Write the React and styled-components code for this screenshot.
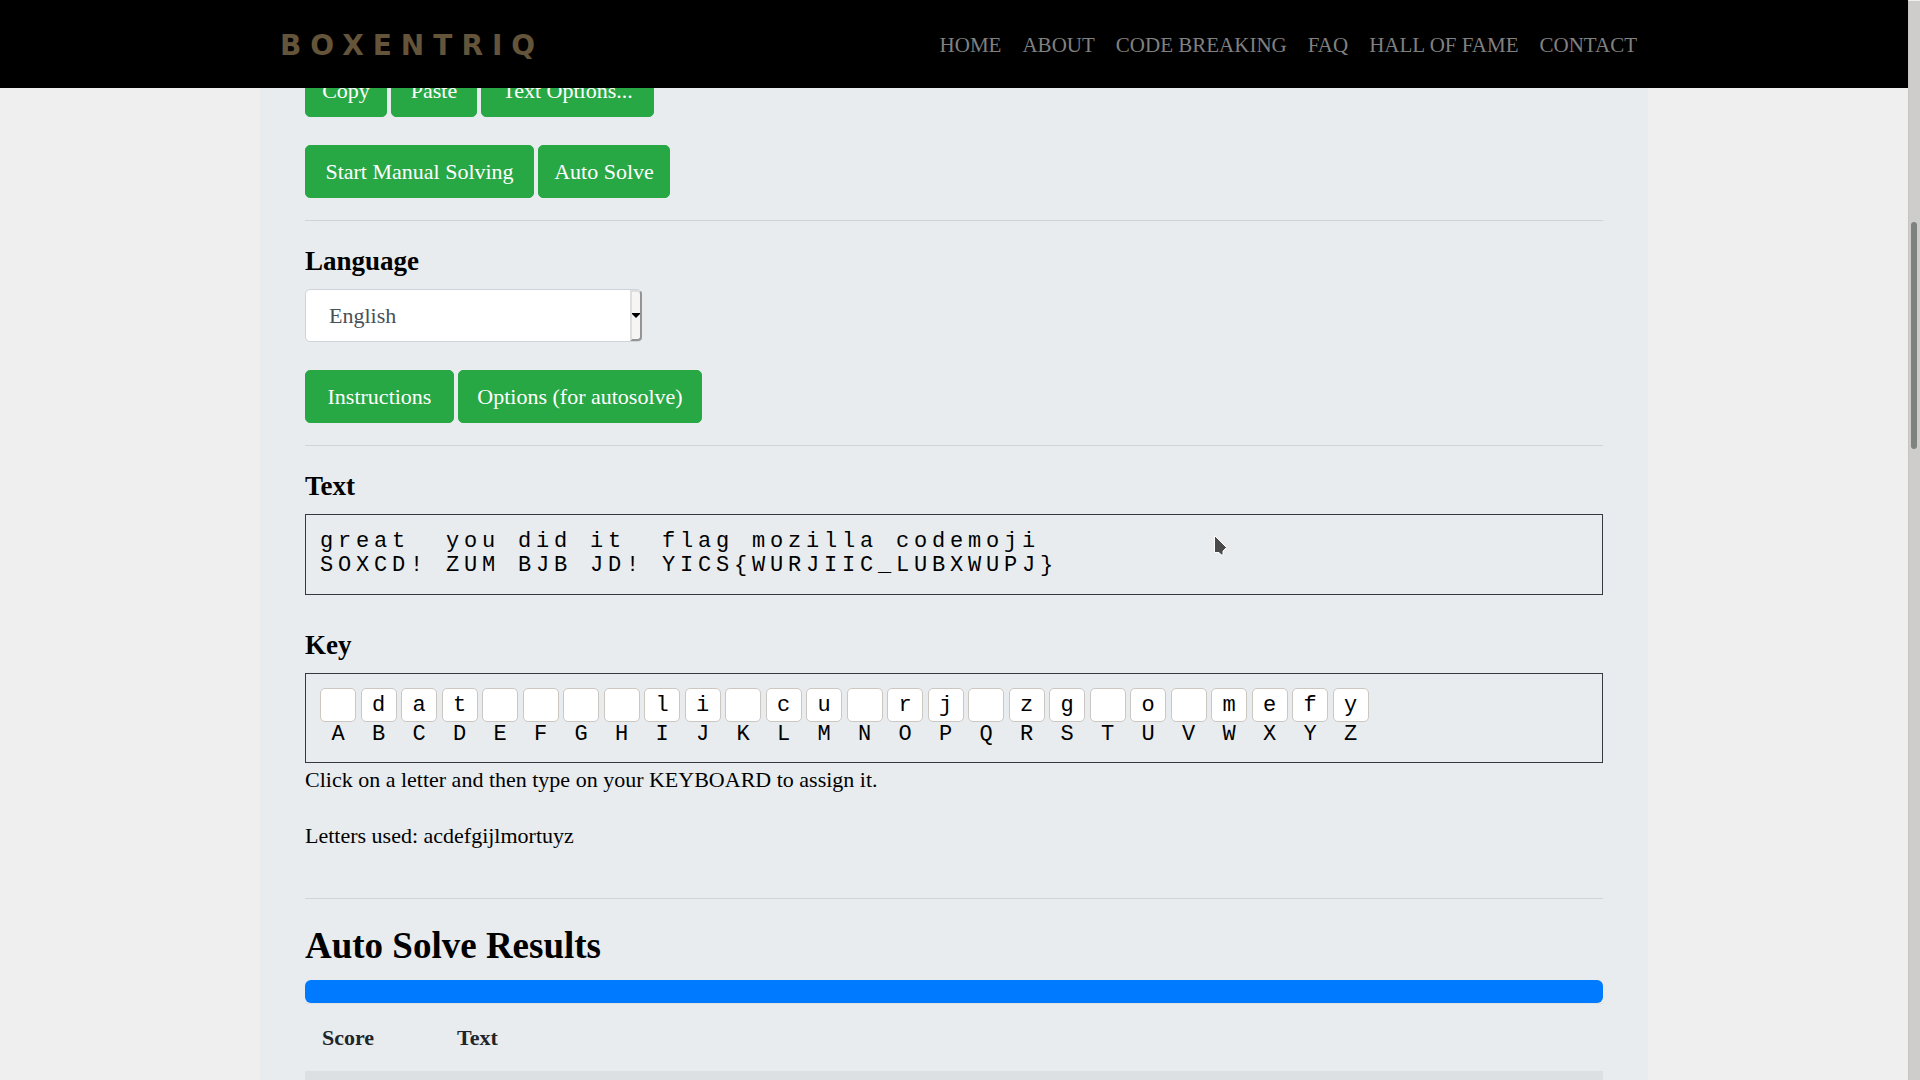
import React from "react";
import styled, { createGlobalStyle } from "styled-components";

const serif = '"Liberation Serif", "Times New Roman", serif';
const mono = '"Liberation Mono", "Courier New", monospace';

const GlobalStyle = createGlobalStyle`
  *, *::before, *::after { box-sizing: border-box; }
  body {
    margin: 0;
    background: #efefef;
    color: #000;
    font: 22px/33px ${serif};
  }
`;

const Shell = styled.div`
  display: grid;
  grid-template-columns: minmax(0, 1fr) 12px;
  height: 100vh;
  overflow: hidden;
`;

const Viewport = styled.div`
  min-width: 0;
  overflow: hidden;
`;

const Header = styled.header`
  position: fixed;
  inset: 0 12px auto 0;
  z-index: 2;
  background: #000;
`;

const HeaderInner = styled.div`
  display: flex;
  align-items: center;
  justify-content: space-between;
  max-width: 1388px;
  height: 88px;
  margin: 0 auto;
  padding: 2px 11px 0 20px;
`;

const Brand = styled.a`
  color: #64543a;
  font: bold 28px/33px "DejaVu Sans", sans-serif;
  letter-spacing: 9px;
  text-decoration: none;
`;

const Nav = styled.nav`
  display: flex;
  gap: 21px;
`;

const NavLink = styled.a`
  color: #808080;
  font-size: 21px;
  text-decoration: none;
`;

const Main = styled.main`
  max-width: 1388px;
  min-height: 100vh;
  margin: 0 auto;
  padding: 64px 45px 0;
  background: #e8ecef;
`;

const ButtonRow = styled.div`
  display: flex;
  flex-wrap: wrap;
  gap: 4px;
  margin-bottom: ${(p) => (p.$last ? 22 : 28)}px;
`;

const Button = styled.button`
  width: ${(p) => p.$width}px;
  padding: 9px 0;
  border: 1px solid #28a745;
  border-radius: 5px;
  background: #28a745;
  color: #fff;
  font: inherit;
  white-space: nowrap;
  cursor: pointer;
`;

const Rule = styled.hr`
  height: 1px;
  margin: 0 0 22px;
  border: 0;
  background: #d0d4d7;
`;

const Heading = styled.h3`
  margin: 0 0 10px;
  font-size: 27px;
  line-height: 36px;
`;

const ResultsHeading = styled.h2`
  margin: 0 0 10px;
  font-size: 37px;
  line-height: 49px;
`;

const SelectWrap = styled.div`
  position: relative;
  width: 337px;
  max-width: 100%;
  margin-bottom: 28px;
`;

const Select = styled.select`
  display: block;
  width: 100%;
  height: 53px;
  padding: 0 23px;
  border: 1px solid #ced4da;
  border-radius: 5px;
  appearance: none;
  background: #fff;
  color: #495057;
  font: inherit;
`;

const SelectArrow = styled.span`
  position: absolute;
  inset: 1px 0 1px auto;
  display: grid;
  place-items: center;
  width: 12px;
  border: 2px solid #dedede;
  border-right-color: #949494;
  border-bottom-color: #949494;
  border-radius: 0 4px 4px 0;
  background: #f6f5f4;
  pointer-events: none;

  svg { display: block; }
`;

const Panel = styled.div`
  padding: 14px 14px 15px;
  border: 1px solid #343a40;
  font-family: ${mono};
  line-height: 24px;
`;

const TextPanel = styled(Panel)`
  display: flex;
  flex-wrap: wrap;
  margin-bottom: 32px;
  padding: 15px 14px 16px;
`;

const Pair = styled.span`
  display: grid;
  grid-template-rows: 24px 24px;
  width: 18px;
  white-space: pre;
`;

const KeyGrid = styled.div`
  display: grid;
  grid-template-columns: repeat(26, 1fr);
  max-width: 1053px;
`;

const KeyCell = styled.label`
  display: flex;
  flex-direction: column;
  gap: 1px;
  width: 36px;
  text-align: center;
`;

const KeyInput = styled.input`
  width: 36px;
  height: 34px;
  padding: 0;
  border: 1px solid #cdc7c2;
  border-radius: 5px;
  background: #fff;
  color: #000;
  font: inherit;
  text-align: center;
`;

const Note = styled.p`
  margin: 0 0 ${(p) => (p.$last ? 46 : 23)}px;
`;

const Progress = styled.div`
  height: 23px;
  border-radius: 6px;
  background: #007bff;
`;

const Table = styled.table`
  width: 100%;
  border-collapse: collapse;
  border-top: 1px solid #dee2e6;
  color: #212529;

  th, td {
    padding: 17px;
    text-align: left;
  }

  th:first-child { width: 135px; }

  tbody tr { height: 67px; background: #dce0e3; }
`;

const ScrollTrack = styled.div`
  margin-top: 1px;
  padding: 221px 3px 0 2px;
  border-left: 1px solid #c8c3be;
  background: #cdcdcd;
`;

const ScrollThumb = styled.div`
  height: 227px;
  border-radius: 3px;
  background: #7e8382;
`;

const Pointer = styled.svg`
  position: fixed;
  top: 534px;
  left: 1213px;
  z-index: 3;
  pointer-events: none;
`;

const links = ["HOME", "ABOUT", "CODE BREAKING", "FAQ", "HALL OF FAME", "CONTACT"];
const plain = "great  you did it  flag mozilla codemoji ";
const cipher = "SOXCD! ZUM BJB JD! YICS{WURJIIC_LUBXWUPJ}";
const alphabet = "ABCDEFGHIJKLMNOPQRSTUVWXYZ";
const assigned = " dat    li cu rj zg o mefy";

export default function App() {
  return (
    <>
      <GlobalStyle />
      <Shell>
        <Viewport>
          <Header>
            <HeaderInner>
              <Brand href="#home">BOXENTRIQ</Brand>
              <Nav>
                {links.map((name) => (
                  <NavLink key={name} href="#nav">{name}</NavLink>
                ))}
              </Nav>
            </HeaderInner>
          </Header>

          <Main>
            <ButtonRow>
              <Button $width={82}>Copy</Button>
              <Button $width={86}>Paste</Button>
              <Button $width={173}>Text Options...</Button>
            </ButtonRow>
            <ButtonRow $last>
              <Button $width={229}>Start Manual Solving</Button>
              <Button $width={132}>Auto Solve</Button>
            </ButtonRow>
            <Rule />

            <Heading><label htmlFor="language">Language</label></Heading>
            <SelectWrap>
              <Select id="language" defaultValue="English">
                <option>English</option>
              </Select>
              <SelectArrow>
                <svg width="8" height="5" viewBox="0 0 8 5" aria-hidden="true">
                  <path d="M0 0h8v1L4 5 0 1z" fill="#000" />
                </svg>
              </SelectArrow>
            </SelectWrap>
            <ButtonRow $last>
              <Button $width={149}>Instructions</Button>
              <Button $width={244}>Options (for autosolve)</Button>
            </ButtonRow>
            <Rule />

            <Heading>Text</Heading>
            <TextPanel>
              {[...cipher].map((letter, i) => (
                <Pair key={i}>
                  <span>{plain[i]}</span>
                  <span>{letter}</span>
                </Pair>
              ))}
            </TextPanel>

            <Heading>Key</Heading>
            <Panel>
              <KeyGrid>
                {[...alphabet].map((letter, i) => (
                  <KeyCell key={letter}>
                    <KeyInput maxLength={1} defaultValue={assigned[i].trim()} />
                    {letter}
                  </KeyCell>
                ))}
              </KeyGrid>
            </Panel>
            <Note>Click on a letter and then type on your KEYBOARD to assign it.</Note>
            <Note $last>Letters used: acdefgijlmortuyz</Note>
            <Rule />

            <ResultsHeading>Auto Solve Results</ResultsHeading>
            <Progress role="progressbar" aria-valuenow={100} aria-label="Auto solve progress" />
            <Table>
              <thead>
                <tr><th>Score</th><th>Text</th></tr>
              </thead>
              <tbody>
                <tr><td /><td /></tr>
              </tbody>
            </Table>
          </Main>
        </Viewport>
        <ScrollTrack><ScrollThumb /></ScrollTrack>
      </Shell>
      <Pointer width="15" height="23" viewBox="0 0 15 23" aria-hidden="true">
        <path d="M1.500 1.500V18.500H6l2.500 2.500h1.500V17l3.500-3.500z" fill="#4a4a4a" stroke="#fff" strokeWidth="1" />
      </Pointer>
    </>
  );
}
